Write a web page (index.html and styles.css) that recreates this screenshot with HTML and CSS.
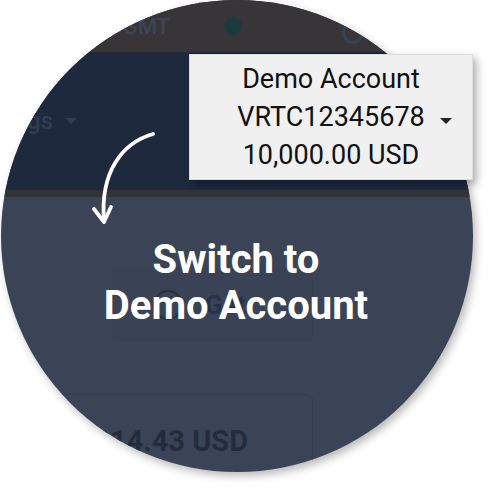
FILE: index.html
```html
<!DOCTYPE html>
<html lang="en">
<head>
  <meta charset="UTF-8">
  <title>Switch to Demo Account</title>
  <link rel="stylesheet" href="styles.css">
</head>
<body>
  <div class="stage">
    <div class="lens">
      <div class="topbar">
        <div class="clock">2024-01-01 12:00:00 GMT</div>
        <div class="status-dot"></div>
        <div class="ring-icon"></div>
      </div>
      <div class="navbar">
        <div class="menu">Settings</div>
        <div class="caret"></div>
      </div>
      <div class="divider"></div>
      <div class="main">
        <div class="ghost-btn">
          <div class="ghost-icon"></div>
          <span>Get</span>
        </div>
        <div class="balance">10,014.43 USD</div>
      </div>

      <svg class="arrow" width="489" height="489" viewBox="0 0 489 489">
        <path d="M153 134 C 122 143, 100 172, 104 221" fill="none" stroke="#fff" stroke-width="3.8" stroke-linecap="round"/>
        <path d="M94 209 L104 222 L111 207" fill="none" stroke="#fff" stroke-width="3.8" stroke-linecap="round" stroke-linejoin="round"/>
      </svg>
      <h1 class="hint">Switch to<br>Demo Account</h1>
    </div>

    <div class="account-card">
      <div class="acc-line">Demo Account</div>
      <div class="acc-line"><span class="acc-id">VRTC12345678</span></div>
      <div class="acc-line">10,000.00 USD</div>
    </div>
  </div>
</body>
</html>
```

FILE: styles.css
```css
html, body {
  margin: 0;
  padding: 0;
  background: #ffffff;
  font-family: Roboto, "Liberation Sans", sans-serif;
}

.stage {
  position: relative;
  width: 489px;
  height: 489px;
  overflow: hidden;
}

.lens {
  position: relative;
  margin-left: 1px;
  width: 472px;
  height: 472px;
  border-radius: 50%;
  overflow: hidden;
  display: flex;
  flex-direction: column;
  background: #3b4456;
  box-shadow: 3px 4px 8px rgba(0, 0, 0, 0.28);
}

/* dimmed app underneath */
.topbar {
  height: 52px;
  flex-shrink: 0;
  background: #373538;
  display: flex;
  align-items: center;
}

.clock {
  width: 169px;
  flex-shrink: 0;
  display: flex;
  justify-content: flex-end;
  white-space: nowrap;
  font-size: 22px;
  font-weight: 500;
  color: #3d4557;
}

.status-dot {
  margin-left: 54px;
  width: 18px;
  height: 18px;
  border-radius: 50%;
  background: #1d3b3f;
  flex-shrink: 0;
}

.ring-icon {
  margin-left: 100px;
  margin-top: 14px;
  width: 16px;
  height: 16px;
  border: 3px solid #34425a;
  border-radius: 50%;
  flex-shrink: 0;
}

.navbar {
  height: 138px;
  flex-shrink: 0;
  background: #1e293e;
  display: flex;
  align-items: center;
}

.menu {
  width: 52px;
  flex-shrink: 0;
  display: flex;
  justify-content: flex-end;
  white-space: nowrap;
  font-size: 24px;
  font-weight: 500;
  color: #323d51;
}

.caret {
  margin-left: 12px;
  width: 0;
  height: 0;
  border-left: 6px solid transparent;
  border-right: 6px solid transparent;
  border-top: 6px solid #323d51;
}

.divider {
  height: 7px;
  flex-shrink: 0;
  background: #333438;
}

.main {
  flex: 1;
  padding-top: 71px;
}

.ghost-btn {
  margin-left: 112px;
  width: 200px;
  height: 73px;
  box-sizing: border-box;
  border: 1px solid #384152;
  border-radius: 4px;
  background: #3a4355;
  display: flex;
  align-items: center;
  font-size: 26px;
  font-weight: 700;
  color: #27314a;
}

.ghost-icon {
  margin-left: 39px;
  margin-right: 22px;
  width: 26px;
  height: 26px;
  border: 2px solid #2a2f3c;
  border-radius: 50%;
}

.balance {
  margin-top: 53px;
  margin-left: -1px;
  width: 313px;
  height: 120px;
  box-sizing: border-box;
  border: 1px solid #353e4f;
  border-radius: 0 6px 0 0;
  display: flex;
  justify-content: flex-end;
  padding: 29px 64px 0 0;
  white-space: nowrap;
  font-size: 29px;
  font-weight: 700;
  color: #232c3c;
}

/* hint overlay */
.arrow {
  position: absolute;
  left: -1px;
  top: 0;
}

.hint {
  position: absolute;
  left: 0;
  right: 0;
  top: 237px;
  margin: 0 0 0 -2px;
  text-align: center;
  font-size: 40px;
  line-height: 46px;
  font-weight: 700;
  color: #ffffff;
}

.account-card {
  position: absolute;
  left: 189px;
  top: 54px;
  width: 284px;
  height: 126px;
  box-sizing: border-box;
  padding-top: 5px;
  background: #f0f0f0;
  border: 1px solid #dcdcdc;
  box-shadow: 4px 4px 8px rgba(0, 0, 0, 0.3);
  display: flex;
  flex-direction: column;
  align-items: center;
}

.acc-line {
  font-size: 27px;
  line-height: 38px;
  color: #111111;
  white-space: nowrap;
}

.acc-id {
  position: relative;
}

.acc-id::after {
  content: "";
  position: absolute;
  right: -27px;
  top: 17px;
  border-left: 6px solid transparent;
  border-right: 6px solid transparent;
  border-top: 6px solid #222222;
}
```
